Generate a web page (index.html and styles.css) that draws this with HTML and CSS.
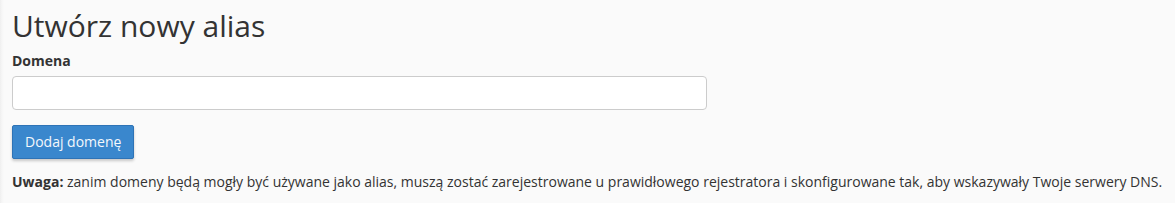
FILE: index.html
```html
<!DOCTYPE html>
<html lang="pl">
<head>
<meta charset="utf-8">
<link rel="stylesheet" href="styles.css">
</head>
<body>
<div class="page">
  <h1 class="title">Utwórz nowy alias</h1>
  <form class="form">
    <label class="label" for="domain">Domena</label>
    <input class="input" id="domain" type="text">
    <button class="btn" type="button">Dodaj domenę</button>
  </form>
  <p class="note"><strong>Uwaga:</strong> zanim domeny będą mogły być używane jako alias, muszą zostać zarejestrowane u prawidłowego rejestratora i skonfigurowane tak, aby wskazywały Twoje serwery DNS.</p>
</div>
</body>
</html>
```
FILE: styles.css
```css
html, body {
  margin: 0;
  padding: 0;
  height: 100%;
}
body {
  background: #fafafa;
  font-family: "Open Sans", "DejaVu Sans", sans-serif;
  color: #333;
}
.page {
  height: 100%;
  box-sizing: border-box;
  padding: 6px 12px 0 12px;
  background: linear-gradient(to right, #efefef 0, #f6f6f6 2px, #fafafa 4px);
}
.title {
  margin: 0;
  font-size: 30px;
  font-weight: 400;
  line-height: 40px;
  color: #333;
}
.form {
  display: flex;
  flex-direction: column;
  align-items: flex-start;
}
.label {
  margin-top: 5px;
  font-size: 14px;
  font-weight: 700;
  line-height: 20px;
}
.input {
  margin-top: 5px;
  width: 695px;
  height: 34px;
  box-sizing: border-box;
  border: 1px solid #ccc;
  border-radius: 4px;
  background: #fff;
  font-family: inherit;
  font-size: 14px;
  padding: 6px 12px;
}
.btn {
  margin-top: 15px;
  height: 34px;
  padding: 0 12px;
  box-sizing: border-box;
  border: 1px solid #2e73b6;
  border-radius: 2px;
  background: #3a87cd;
  color: #f4f8fc;
  font-family: inherit;
  font-size: 14px;
  line-height: 20px;
  box-shadow: 0 2px 3px rgba(0,0,0,0.2);
}
.note {
  margin: 13px 0 0 0;
  font-size: 14px;
  line-height: 20px;
  color: #333;
}
.note strong {
  font-weight: 700;
}
```
